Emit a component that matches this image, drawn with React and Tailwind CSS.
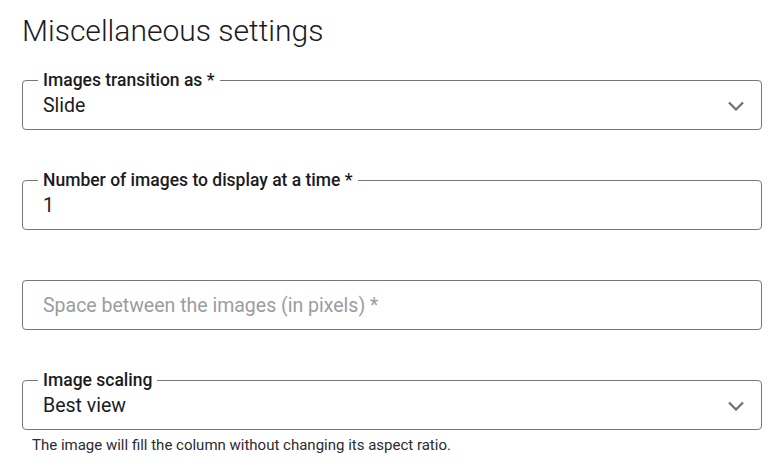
const Chevron = () => (
  <svg width="18" height="10" viewBox="0 0 18 10" className="shrink-0">
    <polyline points="2,1.5 9,8.5 16,1.5" fill="none" stroke="#6f6f73" strokeWidth="2.2" />
  </svg>
);

const Field = ({ label, value, select }) => (
  <fieldset className="h-[60px] border border-[#76767b] rounded-[4px] pl-[15px] pr-[16px] pb-[12px] min-w-0">
    <legend className="px-[5px] text-[17.5px] leading-[20px] font-medium text-[#1b1b1f]">{label}</legend>
    <div className="flex items-center justify-between pl-[5px] mt-[4px]">
      <span className="text-[19.5px] leading-[24px] text-[#1b1b1f]">{value}</span>
      {select && <Chevron />}
    </div>
  </fieldset>
);

export default function App() {
  return (
    <div className="w-[781px] h-[475px] bg-white px-[22px] pt-[13px] overflow-hidden" style={{ fontFamily: 'Roboto, "Liberation Sans", sans-serif' }}>
      <h1 className="text-[30px] leading-[36px] font-light text-[#1b1b1f]">Miscellaneous settings</h1>
      <div className="mt-[21px] w-[740px]">
        <div className="h-[100px]">
          <Field label="Images transition as *" value="Slide" select />
        </div>
        <div className="h-[100px]">
          <Field label="Number of images to display at a time *" value="1" />
        </div>
        <div className="h-[100px] pt-[10px]">
          <div className="h-[50px] border border-[#76767b] rounded-[4px] flex items-center pl-[20px] pt-[2px]">
            <span className="text-[19.5px] leading-[24px] text-[#9c9ca1]">Space between the images (in pixels) *</span>
          </div>
        </div>
        <div>
          <Field label="Image scaling" value="Best view" select />
          <p className="mt-[5px] pl-[10px] text-[15px] leading-[20px] text-[#2b2b2f]">
            The image will fill the column without changing its aspect ratio.
          </p>
        </div>
      </div>
    </div>
  );
}
